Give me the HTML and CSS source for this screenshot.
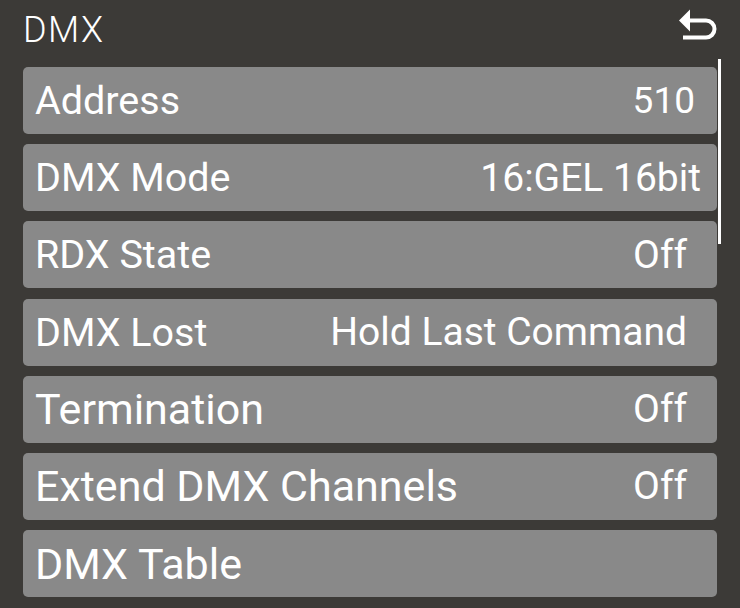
FILE: index.html
```html
<!DOCTYPE html>
<html lang="en">
<head>
<meta charset="utf-8">
<title>DMX</title>
<link rel="stylesheet" href="styles.css">
</head>
<body>
<div class="screen">
  <header class="header">
    <h1 class="title">DMX</h1>
    <svg class="back" width="38" height="31" viewBox="0 0 38 31" aria-label="Back">
      <path d="M0 11.5 L11 0.5 L11 22.5 Z" fill="#fff"/>
      <path d="M10 11.5 H27 A8.5 8.5 0 0 1 27 28.5 H4" stroke="#fff" stroke-width="4" fill="none"/>
    </svg>
  </header>
  <div class="content">
    <ul class="list">
      <li class="row"><span class="label">Address</span><span class="value value-num">510</span></li>
      <li class="row"><span class="label">DMX Mode</span><span class="value value-wide">16:GEL 16bit</span></li>
      <li class="row"><span class="label">RDX State</span><span class="value">Off</span></li>
      <li class="row"><span class="label">DMX Lost</span><span class="value">Hold Last Command</span></li>
      <li class="row row-lg"><span class="label">Termination</span><span class="value">Off</span></li>
      <li class="row row-lg"><span class="label">Extend DMX Channels</span><span class="value">Off</span></li>
      <li class="row row-lg"><span class="label">DMX Table</span></li>
    </ul>
    <div class="scrollbar"></div>
  </div>
</div>
</body>
</html>
```
FILE: styles.css
```css
html, body {
  margin: 0;
  padding: 0;
  background: #3c3a37;
}
body {
  width: 740px;
  height: 608px;
  overflow: hidden;
  font-family: Roboto, "Noto Sans", sans-serif;
  color: #fff;
}
.screen {
  width: 740px;
  height: 608px;
}
.header {
  height: 59px;
  display: flex;
  justify-content: space-between;
  align-items: flex-start;
  padding: 0 23px 0 23px;
  box-sizing: border-box;
}
.title {
  margin: 12px 0 0 0;
  font-size: 36px;
  line-height: 36px;
  font-weight: 300;
  letter-spacing: 1.5px;
}
.back {
  display: block;
  margin-top: 9px;
}
.content {
  display: flex;
  align-items: flex-start;
}
.list {
  list-style: none;
  margin: 0 0 0 23px;
  padding: 8px 0 0 0;
  width: 694px;
  display: flex;
  flex-direction: column;
  gap: 10.2px;
}
.row {
  height: 67px;
  background: #898989;
  border-radius: 5px;
  display: flex;
  align-items: center;
  justify-content: space-between;
  padding: 0 30px 0 12px;
  box-sizing: border-box;
}
.label {
  font-size: 39.5px;
  font-weight: 400;
  white-space: nowrap;
}
.row-lg .label {
  font-size: 43px;
}
.value {
  font-size: 39px;
  font-weight: 400;
  white-space: nowrap;
}
.value-num {
  font-size: 37px;
  margin-right: -8px;
}
.value-wide {
  margin-right: -14px;
}
.scrollbar {
  width: 3px;
  height: 185px;
  margin-left: 1px;
  background: #fff;
}
```
